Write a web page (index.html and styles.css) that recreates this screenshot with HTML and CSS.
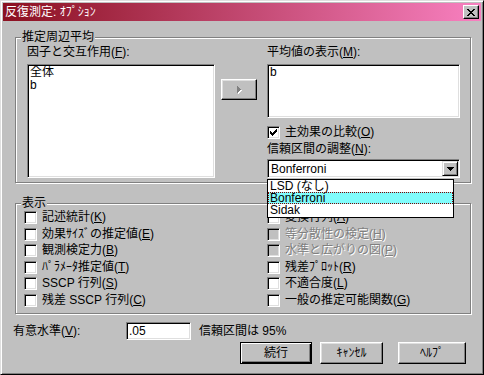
FILE: index.html
```html
<!DOCTYPE html>
<html lang="ja">
<head>
<meta charset="utf-8">
<link rel="stylesheet" href="styles.css">
</head>
<body>
<div class="window">
  <div class="titlebar">
    <span class="title">反復測定: ｵﾌﾟｼｮﾝ</span>
    <span class="close"><svg width="8" height="7" viewBox="0 0 8 7" shape-rendering="crispEdges"><path d="M0 0h2v1h-2zM6 0h2v1h-2zM1 1h2v1h-2zM5 1h2v1h-2zM2 2h4v1h-4zM3 3h2v1h-2zM2 4h4v1h-4zM1 5h2v1h-2zM5 5h2v1h-2zM0 6h2v1h-2zM6 6h2v1h-2z" fill="#000"/></svg></span>
  </div>
  <div class="content">
    <div class="group group-emm">
      <span class="group-label">推定周辺平均</span>
      <div class="emm">
        <div class="col col-left">
          <div class="lbl">因子と交互作用(<u>F</u>):</div>
          <div class="listbox lb-factors">
            <div class="item">全体</div>
            <div class="item">b</div>
          </div>
        </div>
        <div class="col col-mid">
          <span class="btn arrow-btn"><svg width="5" height="8" viewBox="0 0 5 8" shape-rendering="crispEdges"><path d="M1 1h1v7h-1zM2 2h1v5h-1zM3 3h1v3h-1zM4 4h1v1h-1z" fill="#fff"/><path d="M0 0h1v7h-1zM1 1h1v5h-1zM2 2h1v3h-1zM3 3h1v1h-1z" fill="#808080"/></svg></span>
        </div>
        <div class="col col-right">
          <div class="lbl">平均値の表示(<u>M</u>):</div>
          <div class="listbox lb-means">
            <div class="item">b</div>
          </div>
          <label class="chk chk-main">
            <span class="box"><svg width="7" height="7" viewBox="0 0 7 7" shape-rendering="crispEdges"><path d="M6 0h1v3h-1zM5 1h1v3h-1zM4 2h1v3h-1zM3 3h1v3h-1zM2 4h1v3h-1zM1 3h1v3h-1zM0 2h1v3h-1z" fill="#000"/></svg></span>
            <span class="txt">主効果の比較(<u>O</u>)</span>
          </label>
          <div class="lbl lbl-adj">信頼区間の調整(<u>N</u>):</div>
          <div class="combo">
            <span class="combo-text">Bonferroni</span>
            <span class="combo-btn"><svg width="7" height="4" viewBox="0 0 7 4" shape-rendering="crispEdges"><path d="M0 0h7v1h-7zM1 1h5v1h-5zM2 2h3v1h-3zM3 3h1v1h-1z" fill="#000"/></svg></span>
            <div class="dropdown">
              <div class="opt">LSD (なし)</div>
              <div class="opt opt-sel">Bonferroni</div>
              <div class="opt">Sidak</div>
            </div>
          </div>
        </div>
      </div>
    </div>

    <div class="group group-disp">
      <span class="group-label">表示</span>
      <div class="disp-grid">
        <label class="chk"><span class="box"></span><span class="txt">記述統計(<u>K</u>)</span></label>
        <label class="chk"><span class="box"></span><span class="txt">効果ｻｲｽﾞの推定値(<u>E</u>)</span></label>
        <label class="chk"><span class="box"></span><span class="txt">観測検定力(<u>B</u>)</span></label>
        <label class="chk"><span class="box"></span><span class="txt">ﾊﾟﾗﾒｰﾀ推定値(<u>T</u>)</span></label>
        <label class="chk"><span class="box"></span><span class="txt">SSCP 行列(<u>S</u>)</span></label>
        <label class="chk"><span class="box"></span><span class="txt">残差 SSCP 行列(<u>C</u>)</span></label>
        <label class="chk"><span class="box"></span><span class="txt">変換行列(<u>A</u>)</span></label>
        <label class="chk disabled"><span class="box"></span><span class="txt">等分散性の検定(<u>H</u>)</span></label>
        <label class="chk disabled"><span class="box"></span><span class="txt">水準と広がりの図(<u>P</u>)</span></label>
        <label class="chk"><span class="box"></span><span class="txt">残差ﾌﾟﾛｯﾄ(<u>R</u>)</span></label>
        <label class="chk"><span class="box"></span><span class="txt">不適合度(<u>L</u>)</span></label>
        <label class="chk"><span class="box"></span><span class="txt">一般の推定可能関数(<u>G</u>)</span></label>
      </div>
    </div>

    <div class="sig-row">
      <span class="sig-label">有意水準(<u>V</u>):</span>
      <span class="textbox">.05</span>
      <span class="sig-note">信頼区間は 95%</span>
    </div>

    <div class="btn-row">
      <span class="btn push default btn-ok">続行</span>
      <span class="btn push btn-cancel">ｷｬﾝｾﾙ</span>
      <span class="btn push btn-help">ﾍﾙﾌﾟ</span>
    </div>
  </div>
</div>
</body>
</html>
```

FILE: styles.css
```css
* { box-sizing: border-box; }
html, body { margin: 0; padding: 0; }
body {
  width: 484px;
  height: 375px;
  overflow: hidden;
  background: #c0c0c0;
  font-family: "Liberation Sans", "Noto Sans CJK JP", sans-serif;
  font-size: 12px;
  color: #000;
}
u { text-decoration: underline; text-underline-offset: 1px; }

.window {
  width: 484px;
  height: 375px;
  padding: 2px;
  background: #c0c0c0;
  border: 1px solid;
  border-color: #dfdfdf #000 #000 #dfdfdf;
  box-shadow: inset 1px 1px 0 #fff, inset -1px -1px 0 #808080;
}

.titlebar {
  height: 18px;
  display: flex;
  align-items: center;
  justify-content: space-between;
  padding: 0 2px 0 2px;
  background: linear-gradient(to right, #8b1020, #f880c0);
  color: #fff;
}
.title { line-height: 18px; }
.close {
  width: 16px;
  height: 14px;
  display: flex;
  align-items: center;
  justify-content: center;
  background: #c0c0c0;
  border: 1px solid;
  border-color: #fff #000 #000 #fff;
  box-shadow: inset -1px -1px 0 #808080;
}

.content { padding: 16px 10px 0 12px; }

.group {
  position: relative;
  border: 1px solid #808080;
  box-shadow: 1px 1px 0 #fff, inset 1px 1px 0 #fff;
}
.group-label {
  position: absolute;
  top: -7px;
  left: 5px;
  padding: 0 1px;
  line-height: 12px;
  background: #c0c0c0;
}

.group-emm { padding: 6px 10px 4px 11px; }
.emm { display: flex; }
.col-left { width: 188px; }
.col-mid { width: 36px; margin-left: 6px; padding-top: 35px; }
.col-right { width: 193px; margin-left: 10px; }

.lbl { line-height: 16px; height: 16px; margin-bottom: 4px; }
.lbl-adj { margin: 2px 0 2px; }

.listbox {
  background: #fff;
  border: 1px solid;
  border-color: #808080 #fff #fff #808080;
  box-shadow: inset 1px 1px 0 #000, inset -1px -1px 0 #dfdfdf;
  padding: 1px 2px;
}
.lb-factors { height: 114px; }
.lb-means { height: 54px; }
.item { line-height: 13px; height: 13px; white-space: nowrap; }

.btn {
  display: flex;
  align-items: center;
  justify-content: center;
  background: #c0c0c0;
  border: 1px solid;
  border-color: #fff #000 #000 #fff;
  box-shadow: inset -1px -1px 0 #808080, inset 1px 1px 0 #dfdfdf;
}
.arrow-btn { width: 36px; height: 21px; }

.chk { display: flex; align-items: flex-start; gap: 5px; line-height: 13px; white-space: nowrap; }
.chk-main { margin-top: 8px; height: 13px; }
.box {
  flex: none;
  width: 13px;
  height: 13px;
  display: flex;
  align-items: center;
  justify-content: center;
  background: #fff;
  border: 1px solid;
  border-color: #808080 #fff #fff #808080;
  box-shadow: inset 1px 1px 0 #000, inset -1px -1px 0 #dfdfdf;
}
.chk.disabled .box { background: #c0c0c0; }
.chk.disabled .txt { color: #808080; text-shadow: 1px 1px 0 #fff; }

.combo {
  position: relative;
  height: 19px;
  display: flex;
  align-items: center;
  justify-content: space-between;
  padding: 0 1px 0 3px;
  background: #fff;
  border: 1px solid;
  border-color: #808080 #fff #fff #808080;
  box-shadow: inset 1px 1px 0 #000, inset -1px -1px 0 #dfdfdf;
}
.combo-text { line-height: 14px; }
.combo-btn {
  width: 16px;
  height: 15px;
  display: flex;
  align-items: center;
  justify-content: center;
  background: #c0c0c0;
  border: 1px solid;
  border-color: #dfdfdf #000 #000 #dfdfdf;
  box-shadow: inset 1px 1px 0 #fff, inset -1px -1px 0 #808080;
}
.dropdown {
  position: absolute;
  z-index: 10;
  top: 19px;
  left: -1px;
  width: 187px;
  height: 39px;
  background: #fff;
  border: 1px solid #000;
}
.opt { height: 12px; line-height: 12px; padding-left: 2px; white-space: nowrap; }
.opt:last-child { height: 13px; }
.opt-sel { background: #80fcfc; outline: 1px dotted #800000; outline-offset: -1px; }

.group-disp { margin-top: 20px; padding: 7px 4px 3px 8px; }
.disp-grid {
  display: grid;
  grid-auto-flow: column;
  grid-template-columns: 243px 1fr;
  grid-template-rows: 17px 16px 17px 16px 17px 16px;
}

.sig-row { display: flex; align-items: center; margin: 8px 0 0 -2px; height: 18px; }
.sig-label { width: 113px; line-height: 14px; }
.textbox {
  width: 65px;
  height: 18px;
  line-height: 14px;
  padding: 1px 2px;
  background: #fff;
  border: 1px solid;
  border-color: #808080 #fff #fff #808080;
  box-shadow: inset 1px 1px 0 #000, inset -1px -1px 0 #dfdfdf;
}
.sig-note { margin-left: 8px; line-height: 14px; }

.btn-row { display: flex; justify-content: flex-end; margin-top: 2px; padding-right: 5px; }
.push { height: 22px; line-height: 14px; }
.btn-ok { width: 72px; }
.btn-cancel { width: 63px; margin-left: 8px; }
.btn-help { width: 68px; margin-left: 15px; }
.default {
  border: 1px solid #000;
  box-shadow: inset 1px 1px 0 #fff, inset -1px -1px 0 #000, inset -2px -2px 0 #808080;
}
```
